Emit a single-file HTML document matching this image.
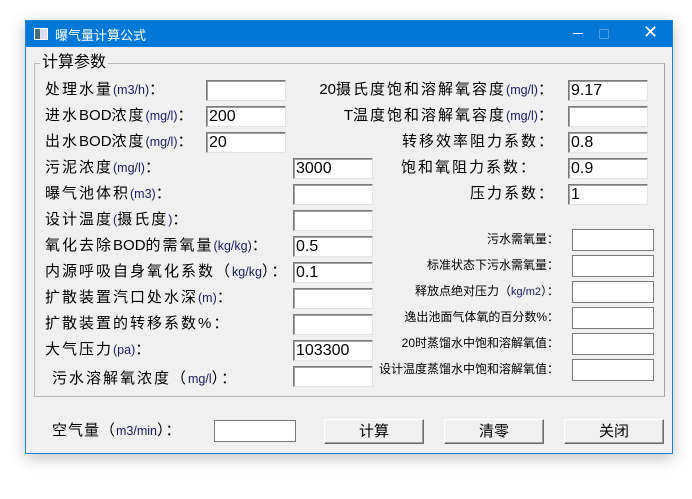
<!DOCTYPE html><html><head><meta charset="utf-8"><style>
body{margin:0;width:692px;height:499px;background:#fff;position:relative;overflow:hidden;font-family:"Liberation Sans","Noto Sans CJK SC",sans-serif;}
.win{position:absolute;left:25px;top:20px;width:648px;height:434px;background:#f0f0f0;border:1px solid #1883d7;box-shadow:0 4px 14px rgba(0,0,0,.25);box-sizing:border-box}
.tb{position:absolute;left:0;top:0;width:100%;height:26px;background:#0078d7;color:#fff;font-size:13px}
.a{position:absolute;white-space:nowrap}
.l{font-size:15px;letter-spacing:2px;color:#000;line-height:20px}
.l i{font-style:normal;font-size:12.5px;letter-spacing:0;color:#1a1a60}
.l b{font-weight:normal;letter-spacing:0}
.s{font-size:12px;letter-spacing:0;color:#000;line-height:20px}
.s i{font-style:normal;font-size:11px;color:#1a1a60}
.tx{position:absolute;width:80px;height:21px;background:#fff;box-sizing:border-box;border:1px solid;border-color:#7a7a7a #e3e3e3 #e3e3e3 #7a7a7a;box-shadow:inset 1px 1px #a0a0a0;font-size:16px;line-height:20px;padding-left:2px}
.fx{position:absolute;width:82px;height:22px;background:#fff;box-sizing:border-box;border:1px solid #7a7a7a}
.bt{position:absolute;width:100px;height:25px;box-sizing:border-box;border:1px solid;border-color:#fff #696969 #696969 #fff;box-shadow:inset -1px -1px #a0a0a0;background:#f0f0f0;text-align:center;font-size:15px;line-height:23px}
</style></head><body>
<div class="win">
<div class="tb"><div class="a" style="left:8px;top:7px;width:12px;height:10px;background:#dde;border:1px solid #fff"><div style="width:5px;height:10px;background:#4a6d7a"></div></div><div class="a" style="left:29px;top:4px;font-size:13px">曝气量计算公式</div>
<div class="a" style="left:547px;top:12px;width:10px;height:1px;background:#fff"></div>
<div class="a" style="left:573px;top:8px;width:8px;height:8px;border:1px solid #4a9de0"></div>
<div class="a" style="left:617px;top:1px;font-size:18px;color:#fff">✕</div></div>
</div>
<div class="a" style="left:34px;top:63px;width:629px;height:332px;border:1px solid #b9b9b9;border-right-color:#a0a0a0"></div>
<div class="a" style="left:40px;top:53px;background:#f0f0f0;font-size:16px;padding:0 2px;line-height:20px">计算参数</div>

<div class="a l" style="left:45px;top:80px">处理水量<i>(m3/h)</i>：</div>
<div class="a l" style="left:45px;top:106px">进水<b>BOD</b>浓度<i>(mg/l)</i>：</div>
<div class="a l" style="left:45px;top:132px">出水<b>BOD</b>浓度<i>(mg/l)</i>：</div>
<div class="a l" style="left:45px;top:158px">污泥浓度<i>(mg/l)</i>：</div>
<div class="a l" style="left:45px;top:184px">曝气池体积<i>(m3)</i>：</div>
<div class="a l" style="left:45px;top:210px">设计温度<i>(</i>摄氏度<i>)</i>：</div>
<div class="a l" style="left:45px;top:236px">氧化去除<b>BOD</b>的需氧量<i>(kg/kg)</i>：</div>
<div class="a l" style="left:45px;top:262px">内源呼吸自身氧化系数（<i>kg/kg</i>）：</div>
<div class="a l" style="left:45px;top:288px">扩散装置汽口处水深<i>(m)</i>：</div>
<div class="a l" style="left:45px;top:314px">扩散装置的转移系数%：</div>
<div class="a l" style="left:45px;top:340px">大气压力<i>(pa)</i>：</div>
<div class="a l" style="left:52px;top:369px">污水溶解氧浓度（<i>mg/l</i>）：</div>

<div class="tx" style="left:206px;top:80px"></div>
<div class="tx" style="left:206px;top:106px">200</div>
<div class="tx" style="left:206px;top:132px">20</div>
<div class="tx" style="left:293px;top:158px">3000</div>
<div class="tx" style="left:293px;top:184px"></div>
<div class="tx" style="left:293px;top:210px"></div>
<div class="tx" style="left:293px;top:236px">0.5</div>
<div class="tx" style="left:293px;top:262px">0.1</div>
<div class="tx" style="left:293px;top:288px"></div>
<div class="tx" style="left:293px;top:314px"></div>
<div class="tx" style="left:293px;top:340px">103300</div>
<div class="tx" style="left:293px;top:366px"></div>

<div class="a l" style="right:137px;top:80px"><b>20</b>摄氏度饱和溶解氧容度<i>(mg/l)</i>：</div>
<div class="a l" style="right:137px;top:106px"><b>T</b>温度饱和溶解氧容度<i>(mg/l)</i>：</div>
<div class="a l" style="right:137px;top:132px">转移效率阻力系数：</div>
<div class="a l" style="right:155px;top:158px">饱和氧阻力系数：</div>
<div class="a l" style="right:137px;top:184px">压力系数：</div>
<div class="tx" style="left:568px;top:80px">9.17</div>
<div class="tx" style="left:568px;top:106px"></div>
<div class="tx" style="left:568px;top:132px">0.8</div>
<div class="tx" style="left:568px;top:158px">0.9</div>
<div class="tx" style="left:568px;top:184px">1</div>

<div class="a s" style="right:133px;top:229px">污水需氧量：</div>
<div class="a s" style="right:133px;top:255px">标准状态下污水需氧量：</div>
<div class="a s" style="right:133px;top:281px">释放点绝对压力（<i>kg/m2</i>）：</div>
<div class="a s" style="right:133px;top:307px">逸出池面气体氧的百分数%：</div>
<div class="a s" style="right:133px;top:333px">20时蒸馏水中饱和溶解氧值：</div>
<div class="a s" style="right:133px;top:359px">设计温度蒸馏水中饱和溶解氧值：</div>
<div class="fx" style="left:572px;top:229px"></div>
<div class="fx" style="left:572px;top:255px"></div>
<div class="fx" style="left:572px;top:281px"></div>
<div class="fx" style="left:572px;top:307px"></div>
<div class="fx" style="left:572px;top:333px"></div>
<div class="fx" style="left:572px;top:359px"></div>

<div class="a l" style="left:52px;top:421px;letter-spacing:1px">空气量（<i>m3/min</i>）：</div>
<div class="fx" style="left:214px;top:420px;width:82px"></div>
<div class="bt" style="left:324px;top:419px">计算</div>
<div class="bt" style="left:444px;top:419px">清零</div>
<div class="bt" style="left:564px;top:419px">关闭</div>
</body></html>
